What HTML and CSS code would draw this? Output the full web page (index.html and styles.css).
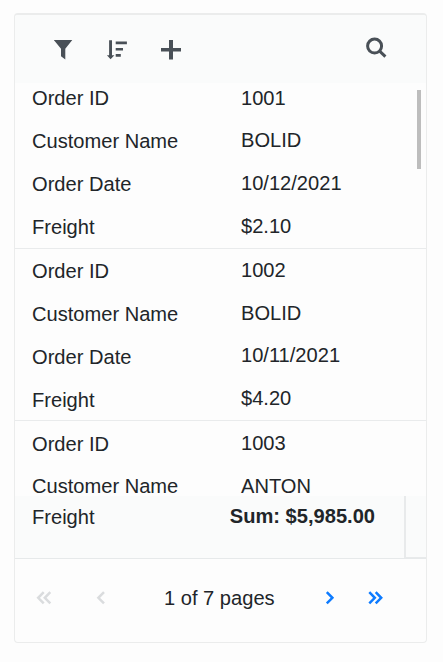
FILE: index.html
```html
<!DOCTYPE html>
<html lang="en">
<head>
<meta charset="utf-8">
<title>Orders</title>
<link rel="stylesheet" href="styles.css">
</head>
<body>
<main class="grid">
  <header class="toolbar">
    <svg class="icon" width="20" height="22" viewBox="0 0 20 22"><path d="M0.8 1H19.3L12.3 9.8V20.6L8 17.3V9.8Z"/></svg>
    <svg class="icon icon-sort" width="22" height="22" viewBox="0 0 22 22"><path d="M3.1 1.2H6V16.2H8.4L4.6 20.2L0.9 16.2H3.1ZM9.7 2.5H20.9V5.2H9.7ZM9.7 8.9H17V11.5H9.7ZM9.7 15.1H14.8V17.7H9.7Z"/></svg>
    <svg class="icon icon-add" width="22" height="22" viewBox="0 0 22 22"><path d="M9 1H13V9H21V12.5H13V20.4H9V12.5H1V9H9Z"/></svg>
    <svg class="icon icon-search" width="24" height="24" viewBox="0 0 24 24"><circle cx="10.6" cy="10.1" r="7"/><path d="M15.4 14.9L21.4 20.6"/></svg>
  </header>
  <section class="content">
    <article class="record record-first">
      <div class="labels"><span>Order ID</span><span>Customer Name</span><span>Order Date</span><span>Freight</span></div>
      <div class="values"><span>1001</span><span>BOLID</span><span>10/12/2021</span><span>$2.10</span></div>
    </article>
    <article class="record record-middle">
      <div class="labels"><span>Order ID</span><span>Customer Name</span><span>Order Date</span><span>Freight</span></div>
      <div class="values"><span>1002</span><span>BOLID</span><span>10/11/2021</span><span>$4.20</span></div>
    </article>
    <article class="record record-last">
      <div class="labels"><span>Order ID</span><span>Customer Name</span></div>
      <div class="values"><span>1003</span><span>ANTON</span></div>
    </article>
    <div class="scroll-thumb"></div>
  </section>
  <section class="summary">
    <span class="summary-label">Freight</span>
    <strong class="summary-value">Sum: $5,985.00</strong>
    <div class="summary-end"></div>
  </section>
  <footer class="pager">
    <svg class="arrow off" width="18" height="16" viewBox="0 0 18 16"><path d="M8.7 2.2L3.2 7.8L8.7 13.4M15.3 2.2L9.8 7.8L15.3 13.4"/></svg>
    <svg class="arrow off prev" width="12" height="16" viewBox="0 0 12 16"><path d="M9 2.2L3.4 7.8L9 13.4"/></svg>
    <span class="page-text">1 of 7 pages</span>
    <svg class="arrow next" width="12" height="16" viewBox="0 0 12 16"><path d="M2.8 2.2L8.4 7.8L2.8 13.4"/></svg>
    <svg class="arrow last" width="18" height="16" viewBox="0 0 18 16"><path d="M3.3 2.2L8.8 7.8L3.3 13.4M9.7 2.2L15.2 7.8L9.7 13.4"/></svg>
  </footer>
</main>
</body>
</html>
```
FILE: styles.css
```css
* { box-sizing: border-box; }
body {
  margin: 0;
  padding: 13px 0 0 14px;
  background: #fdfdfd;
  color: #212529;
  font: 20.1px/24px "Liberation Sans", Arial, sans-serif;
}
.grid {
  width: 413px;
  height: 630px;
  border: 1px solid #ebecec;
  border-top-width: 2px;
  border-radius: 4px;
  overflow: hidden;
}
.toolbar {
  display: flex;
  align-items: center;
  height: 68px;
  padding: 1px 38px 0 38px;
  background: #fafbfb;
}
.icon { fill: #495057; flex: none; }
.icon-sort { margin-left: 33px; }
.icon-add { margin-left: 32px; }
.icon-search {
  margin: 0 0 4px auto;
  fill: none;
  stroke: #495057;
  stroke-width: 3;
}
.content {
  position: relative;
  height: 413px;
  overflow: hidden;
}
.record {
  display: flex;
  height: 172px;
  border-bottom: 1px solid #e9ebec;
}
.record-first { margin-top: -6px; }
.labels, .values {
  display: flex;
  flex-direction: column;
}
.labels {
  width: 209px;
  padding-left: 17px;
}
.labels span { height: 43px; line-height: 43px; }
.values { padding-left: 17px; }
.values span { height: 42.6px; line-height: 43px; }
.record-first .values { margin-top: -0.2px; }
.record-middle .labels { padding-top: 1px; }
.record-last { border-bottom: 0; }
.record-last .labels { padding-top: 2px; }
.record-last .labels span { height: 42px; }
.record-last .values { padding-top: 1px; }
.scroll-thumb {
  position: absolute;
  top: 7px;
  right: 5px;
  width: 4px;
  height: 79px;
  background: #bdbdbd;
}
.summary {
  display: flex;
  align-items: flex-start;
  height: 63px;
  background: #fafbfb;
  border-bottom: 1px solid #e6e9ea;
}
.summary-label { padding: 9px 0 0 17px; }
.summary-value { margin-left: auto; padding: 8px 29px 0 0; }
.summary-end {
  align-self: stretch;
  width: 22px;
  border-left: 2px solid #e8eaeb;
  border-bottom: 1px solid #e8eaeb;
}
.pager {
  display: flex;
  align-items: center;
  height: 77px;
  padding-left: 20px;
}
.arrow { fill: none; stroke: #0d7bff; stroke-width: 2.5; flex: none; }
.off { stroke: #dadcde; }
.prev { margin-left: 42px; }
.page-text { width: 112px; margin-left: 57px; white-space: nowrap; }
.next { margin-left: 48px; }
.last { margin-left: 30px; }
```
